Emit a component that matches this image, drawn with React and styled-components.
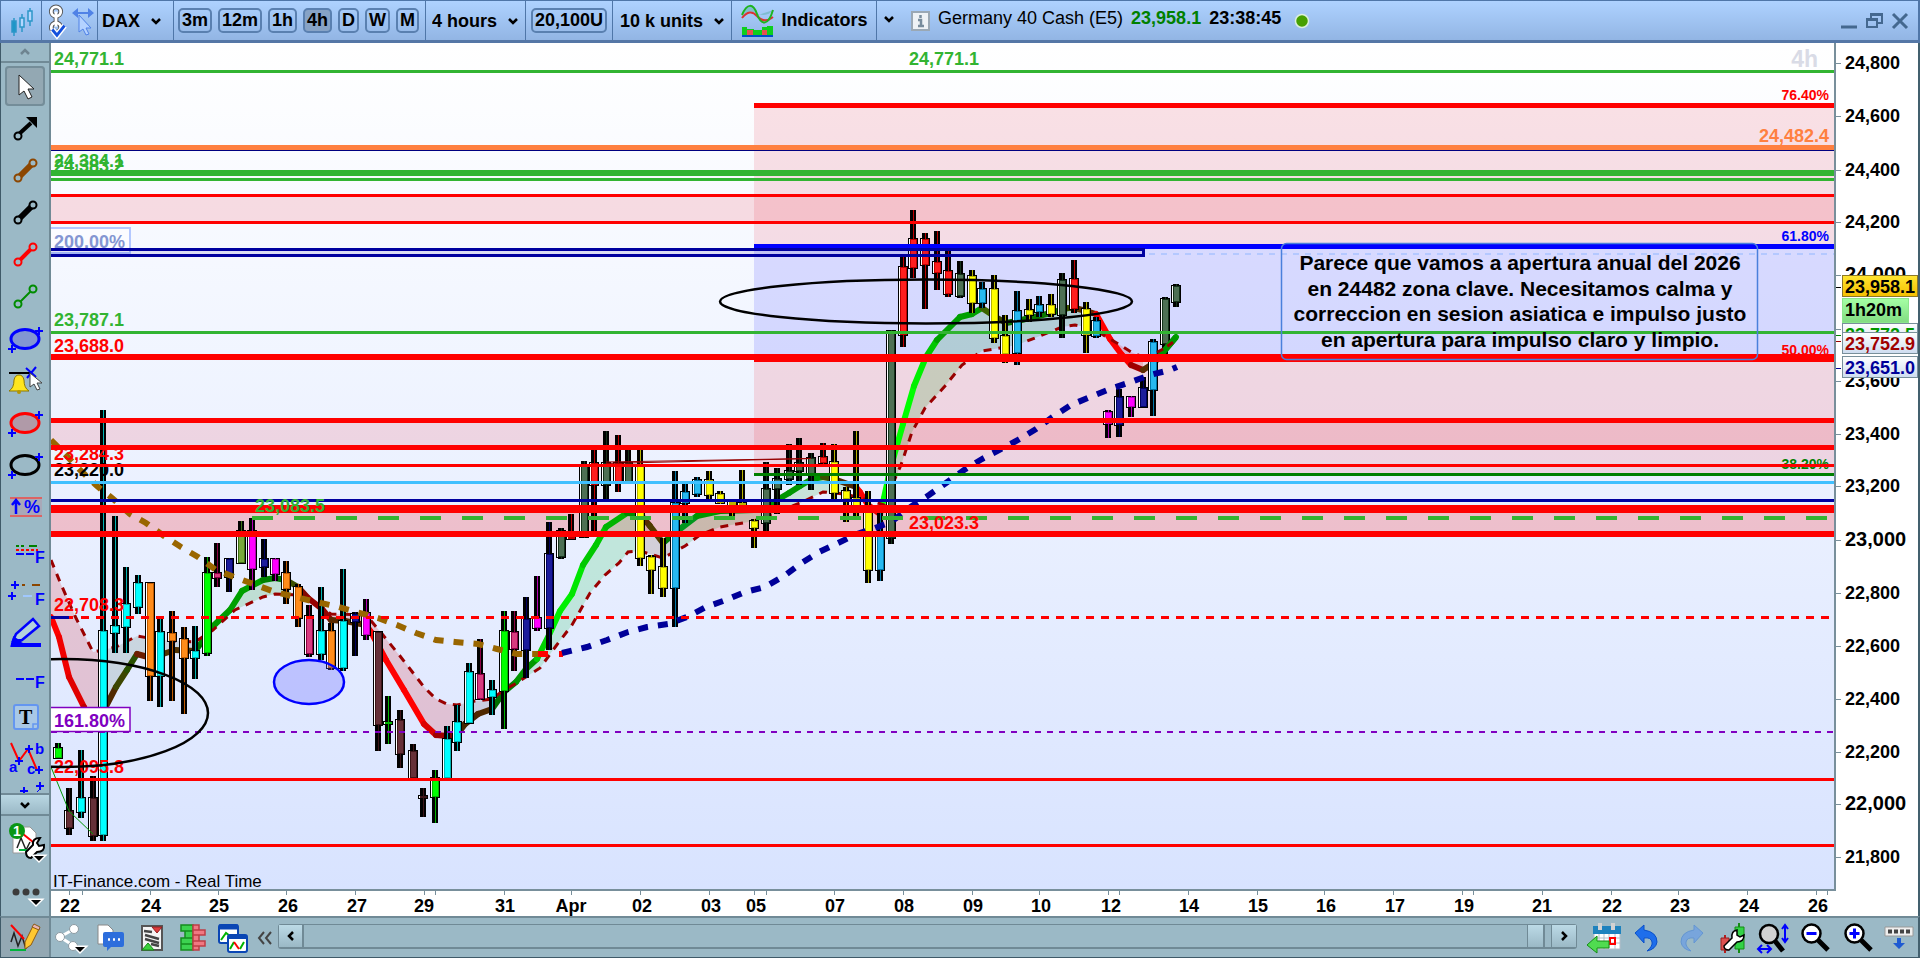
import styled, { createGlobalStyle, css } from "styled-components";

const GlobalStyle = createGlobalStyle`
  * {
    box-sizing: border-box;
  }

  body {
    margin: 0;
    overflow: hidden;
    font-family: "Liberation Sans", Arial, sans-serif;
    color: #000;
  }

  button, select {
    font: inherit;
    color: inherit;
    padding: 0;
    margin: 0;
    border: 0;
    background: none;
  }
`;

const Window = styled.div`
  display: flex;
  flex-direction: column;
  height: 100vh;
  background-color: #9bb9c6;
`;

const TopBar = styled.header`
  display: flex;
  height: 43px;
  flex-shrink: 0;
  border-top: 1px solid #4f76a8;
  border-bottom: 3px solid #5577a6;
  border-left: 1px solid #4f76a8;
  border-right: 2px solid #4f76a8;
  background: linear-gradient(#aed2ff, #92b5e4);
  font-size: 18px;
  font-weight: bold;
`;

const Group = styled.div`
  display: flex;
  align-items: center;
  width: ${(props) => props.$width}px;
  padding-left: ${(props) => props.$pad || 0}px;
  gap: ${(props) => props.$gap || 0}px;
  border-right: 1px solid #4f76a8;
  flex-shrink: 0;
`;

const IconButton = styled.button`
  display: flex;
  align-items: center;
  justify-content: center;
  flex-shrink: 0;
  width: ${(props) => props.$width || 32}px;
  height: ${(props) => props.$height || 36}px;

  svg {
    overflow: visible;
  }
`;

const Frame = styled.button`
  height: 25px;
  padding: 0 2px;
  line-height: 21px;
  border: 2px solid #5a80b0;
  border-radius: 5px;
  white-space: nowrap;
  ${(props) =>
    props.$active &&
    css`
      background-color: #87a3c6;
    `}
`;

const Picker = styled.label`
  display: flex;
  align-items: center;
  gap: 10px;

  select {
    appearance: none;
    width: ${(props) => props.$width}px;
    outline: none;
  }
`;

const Quote = styled.div`
  display: flex;
  align-items: center;
  flex: 1;
  gap: 8px;
  padding: 0 0 4px 6px;
  white-space: nowrap;
`;

const InfoIcon = styled.svg`
  margin: 4px 0 0 8px;
`;

const StatusDot = styled.svg`
  margin-top: 5px;
`;

const Name = styled.span`
  font-weight: normal;
`;

const Last = styled.span`
  color: #008000;
`;

const WindowButtons = styled.div`
  display: flex;
  align-items: center;
  padding-right: 10px;
  gap: 9px;
`;

const Middle = styled.main`
  display: flex;
  flex: 1;
  min-height: 0;
`;

const Sidebar = styled.nav`
  display: flex;
  flex-direction: column;
  width: 51px;
  flex-shrink: 0;
  border-left: 1px solid #3f5a68;
  border-right: 2px solid #708a96;
  background-color: #9bb9c6;
`;

const Scroller = styled.button`
  display: flex;
  align-items: center;
  justify-content: center;
  height: 20px;
  flex-shrink: 0;
  border-bottom: 2px solid #708a96;
  ${(props) =>
    props.$raised &&
    css`
      height: 23px;
      border-top: 2px solid #708a96;
      background: linear-gradient(#b9d7e3, #9bb9c6);
    `}
`;

const Tools = styled.div`
  display: flex;
  flex-direction: column;
  align-items: center;
  gap: 2px;
  padding-top: 3px;
  flex: 1;
  min-height: 0;
  overflow: hidden;
`;

const Tool = styled.button`
  width: 40px;
  height: 40px;
  flex-shrink: 0;
  border-radius: 4px;
  ${(props) =>
    props.$active &&
    css`
      background-color: #93a8b3;
      box-shadow: inset 0 0 0 2px #748d99;
    `}

  svg {
    display: block;
    overflow: visible;
  }
`;

const SideFoot = styled.div`
  display: flex;
  flex-direction: column;
  align-items: center;
  height: 100px;
  flex-shrink: 0;
  padding-top: 6px;
  gap: 20px;
`;

const Chart = styled.section`
  display: flex;
  flex-direction: column;
  flex: 1;
  min-width: 0;
  border-right: 2px solid #43606e;
  background-color: #fff;

  svg text {
    font-size: 18px;
    font-weight: bold;
    white-space: pre;
  }
`;

const Row = styled.div`
  display: flex;
  flex: 1;
  min-height: 0;
`;

const Plot = styled.svg`
  flex: 1;
  min-width: 0;
  background: linear-gradient(#ffffff, #eaf0ff 55%, #d8e3ff);
`;

const PriceAxis = styled.svg`
  width: 84px;
  flex-shrink: 0;
  border-left: 2px solid #788f9b;
`;

const TimeAxis = styled.svg`
  height: 27px;
  flex-shrink: 0;
`;

const BottomBar = styled.footer`
  display: flex;
  align-items: center;
  height: 42px;
  flex-shrink: 0;
  border-top: 2px solid #708a96;
  border-bottom: 1px solid #3f5a68;
  border-left: 1px solid #3f5a68;
  border-right: 2px solid #43606e;
  background-color: #9bb9c6;
`;

const DrawMode = styled(IconButton)`
  width: 50px;
  height: 39px;
  border-right: 2px solid #708a96;
  background-color: #93a8b3;
`;

const BottomIcons = styled.div`
  display: flex;
  align-items: center;
  gap: 6px;
  padding: ${(props) => props.$padding};
`;

const Track = styled.div`
  display: flex;
  flex: 1;
  justify-content: space-between;
  height: 25px;
  margin-bottom: 2px;
  border: 2px solid #708a96;
  border-width: 1px 1px 2px;
  border-radius: 3px;
`;

const TrackButton = styled.button`
  display: flex;
  align-items: center;
  justify-content: center;
  width: 25px;
  border: solid #708a96;
  border-width: ${(props) => (props.$end ? "0 0 0 1px" : "0 2px 0 0")};
  background: linear-gradient(#bcdae6, #9bb9c6);
`;

const TrackEnd = styled.div`
  display: flex;
  gap: 6px;
`;

const Thumb = styled.div`
  width: 18px;
  border: solid #708a96;
  border-width: 0 2px 0 1px;
  background: linear-gradient(#bcdae6, #9bb9c6);
`;

const GREEN = "#32b432";
const RED = "#ff0000";
const NAVY = "#0000a0";

// candle colours: [fill, shaded edge]
const TONES = {
  g: ["#00ff00", "#00b400"],
  m: ["#663038", "#3c1418"],
  c: ["#00ffff", "#00b4b4"],
  o: ["#ff8c1a", "#c05a00"],
  p: ["#d83c80", "#8c0046"],
  n: ["#1c1c9c", "#000060"],
  l: ["#78aa3c", "#3c6e14"],
  f: ["#ff00ff", "#b400b4"],
  d: ["#4e7054", "#14321a"],
  r: ["#ff1e1e", "#c00000"],
  y: ["#ffff00", "#b9b400"],
  s: ["#28b9f0", "#0078aa"],
};

// x, high, body top, body bottom, low, tone
const CANDLES = [
  [58, 743, 748, 758, 758, "g"],
  [69, 788, 811, 828, 835, "m"],
  [81, 750, 798, 812, 818, "c"],
  [93, 776, 798, 836, 841, "m"],
  [103, 410, 631, 835, 841, "c"],
  [115, 516, 626, 633, 653, "c"],
  [126, 567, 604, 627, 653, "c"],
  [138, 575, 583, 607, 614, "c"],
  [150, 583, 583, 676, 701, "o"],
  [160, 619, 632, 676, 707, "c"],
  [172, 611, 633, 641, 701, "o"],
  [184, 627, 639, 658, 714, "o"],
  [195, 626, 651, 658, 679, "c"],
  [207, 557, 573, 653, 656, "g"],
  [217, 543, 573, 578, 587, "p"],
  [229, 558, 559, 577, 592, "n"],
  [241, 521, 531, 563, 563, "l"],
  [252, 518, 531, 569, 590, "f"],
  [264, 539, 559, 567, 577, "n"],
  [275, 558, 559, 574, 581, "f"],
  [286, 561, 573, 589, 604, "o"],
  [298, 584, 587, 618, 627, "o"],
  [309, 605, 616, 654, 657, "p"],
  [321, 587, 631, 654, 660, "c"],
  [331, 623, 631, 668, 670, "o"],
  [343, 569, 621, 668, 671, "c"],
  [355, 612, 614, 622, 656, "n"],
  [366, 599, 613, 635, 640, "f"],
  [378, 632, 632, 725, 751, "m"],
  [388, 696, 722, 723, 744, "g"],
  [400, 710, 720, 754, 768, "m"],
  [413, 744, 751, 778, 778, "m"],
  [423, 788, 796, 797, 817, "m"],
  [435, 770, 778, 797, 823, "g"],
  [447, 726, 739, 778, 778, "c"],
  [457, 705, 722, 742, 751, "c"],
  [469, 663, 672, 723, 723, "c"],
  [480, 639, 674, 699, 700, "p"],
  [492, 680, 690, 697, 715, "c"],
  [504, 611, 631, 691, 729, "g"],
  [514, 611, 632, 649, 671, "p"],
  [526, 597, 619, 650, 678, "n"],
  [537, 576, 618, 628, 631, "f"],
  [549, 522, 554, 628, 650, "n"],
  [561, 528, 531, 557, 559, "d"],
  [571, 514, 537, 538, 538, "r"],
  [584, 461, 465, 537, 538, "d"],
  [594, 447, 463, 485, 532, "r"],
  [606, 431, 463, 485, 502, "d"],
  [618, 435, 463, 482, 492, "r"],
  [628, 448, 463, 483, 484, "d"],
  [640, 449, 465, 558, 566, "y"],
  [651, 555, 557, 570, 594, "y"],
  [663, 538, 567, 588, 597, "y"],
  [675, 471, 503, 588, 627, "s"],
  [685, 483, 492, 503, 523, "s"],
  [697, 477, 480, 494, 497, "s"],
  [709, 471, 480, 495, 502, "y"],
  [720, 491, 494, 503, 504, "y"],
  [732, 500, 502, 506, 517, "y"],
  [742, 470, 503, 506, 510, "y"],
  [754, 519, 521, 528, 548, "y"],
  [766, 462, 489, 523, 532, "d"],
  [777, 468, 479, 489, 514, "d"],
  [789, 444, 471, 479, 485, "d"],
  [799, 438, 463, 471, 485, "d"],
  [811, 453, 458, 475, 490, "d"],
  [823, 443, 457, 463, 467, "r"],
  [834, 444, 462, 493, 499, "y"],
  [846, 487, 491, 499, 522, "y"],
  [856, 431, 498, 506, 517, "y"],
  [868, 491, 512, 570, 583, "y"],
  [880, 510, 535, 570, 581, "s"],
  [891, 330, 331, 538, 544, "d"],
  [903, 257, 267, 335, 347, "r"],
  [913, 210, 239, 268, 278, "r"],
  [925, 233, 239, 265, 309, "r"],
  [937, 231, 262, 273, 290, "r"],
  [948, 251, 271, 294, 297, "r"],
  [960, 261, 274, 296, 298, "d"],
  [972, 270, 276, 303, 313, "y"],
  [982, 282, 289, 303, 308, "s"],
  [994, 275, 289, 338, 343, "y"],
  [1005, 315, 336, 354, 363, "y"],
  [1017, 291, 311, 353, 365, "s"],
  [1029, 299, 310, 315, 322, "y"],
  [1039, 296, 305, 312, 317, "s"],
  [1051, 294, 305, 314, 317, "y"],
  [1062, 273, 280, 315, 338, "d"],
  [1074, 260, 279, 309, 313, "r"],
  [1086, 302, 309, 335, 353, "y"],
  [1096, 317, 321, 336, 338, "s"],
  [1108, 410, 412, 424, 438, "f"],
  [1119, 389, 397, 425, 437, "n"],
  [1131, 396, 397, 407, 417, "f"],
  [1143, 377, 388, 407, 407, "n"],
  [1153, 339, 342, 390, 416, "s"],
  [1165, 297, 299, 344, 354, "d"],
  [1176, 284, 286, 302, 307, "d"],
];

// fast average: x, y, colour of the stretch that ends there
const FAST = [
  [51, 617], [59, 637, "#ff0000"], [69, 677, "#f00000"], [84, 707, "#e00000"],
  [93, 725, "#c00000"], [103, 712, "#5a1e00"], [116, 687, "#502800"],
  [127, 670, "#3c4600"], [137, 654, "#285000"], [148, 657, "#6e1e00"],
  [160, 655, "#6e1e00"], [175, 650, "#503200"], [195, 651, "#503200"],
  [202, 642, "#007800"], [209, 630, "#008c00"], [230, 610, "#009b00"],
  [242, 591, "#00a000"], [263, 580, "#00a000"], [275, 578, "#008200"],
  [286, 580, "#007800"], [298, 587, "#3c5000"], [308, 598, "#820a00"],
  [322, 609, "#960000"], [331, 620, "#960000"], [345, 621, "#5a2800"],
  [366, 625, "#5a2800"], [371, 632, "#dc0000"], [386, 660, "#ff0000"],
  [404, 690, "#ff0000"], [424, 724, "#ff0000"], [436, 735, "#dc0000"],
  [447, 736, "#a00000"], [457, 735, "#820000"], [465, 724, "#462800"],
  [478, 714, "#462800"], [492, 709, "#502800"], [504, 692, "#006e00"],
  [516, 682, "#008200"], [526, 669, "#009600"], [537, 659, "#009600"],
  [549, 635, "#00d200"], [560, 611, "#00f000"], [572, 594, "#00f000"],
  [583, 565, "#00e600"], [596, 545, "#00c800"], [606, 527, "#00c800"],
  [627, 513, "#00b400"], [640, 514, "#008c00"], [650, 526, "#5a2d00"],
  [663, 543, "#503c00"], [676, 532, "#007800"], [697, 516, "#00961e"],
  [720, 511, "#009600"], [754, 510, "#007d00"], [769, 506, "#008200"],
  [777, 500, "#009600"], [789, 493, "#009600"], [800, 486, "#009600"],
  [812, 479, "#009600"], [823, 477, "#009600"], [834, 479, "#3c5000"],
  [856, 487, "#502800"], [860, 492, "#ff0000"], [868, 505, "#ff0000"],
  [880, 514, "#dc0000"], [884, 498, "#00ff00"], [890, 470, "#00ff00"],
  [903, 424, "#00ff00"], [914, 386, "#00ff00"], [926, 357, "#00f000"],
  [937, 340, "#00c800"], [960, 317, "#00a000"], [972, 314, "#00a000"],
  [982, 308, "#00a000"], [994, 316, "#3c6400"], [1006, 323, "#3c4600"],
  [1017, 321, "#0a6e00"], [1051, 313, "#0a7800"], [1068, 308, "#0a8200"],
  [1075, 308, "#3c5000"], [1086, 311, "#5a3200"], [1096, 314, "#6e2800"],
  [1110, 339, "#ff0000"], [1122, 355, "#ff0000"], [1131, 365, "#ff0000"],
  [1143, 370, "#a00000"], [1154, 363, "#5a2d00"], [1165, 350, "#008200"],
  [1176, 337, "#00a000"],
];

const SLOW = [
  [51, 560], [60, 582], [75, 616], [93, 652], [116, 647], [137, 636],
  [160, 640], [195, 642], [213, 630], [235, 610], [263, 597], [275, 594],
  [298, 595], [309, 600], [331, 614], [366, 615], [378, 629], [400, 656],
  [424, 687], [436, 699], [447, 704], [457, 705], [475, 701], [492, 699],
  [504, 690], [515, 684], [540, 668], [556, 646], [572, 625], [590, 593],
  [605, 575], [619, 563], [628, 552], [640, 551], [663, 558], [685, 546],
  [700, 535], [720, 527], [754, 521], [777, 512], [800, 503], [823, 492],
  [845, 494], [868, 500], [884, 505], [890, 490], [901, 465], [912, 432],
  [925, 408], [945, 386], [962, 365], [982, 351], [1000, 348], [1017, 345],
  [1040, 336], [1062, 327], [1075, 325], [1086, 327], [1100, 333],
  [1120, 345], [1131, 352], [1143, 357], [1154, 354], [1165, 348], [1176, 340],
];

const BANDS = [
  [51, 103, "rgba(220,0,0,.17)"],
  [103, 208, "rgba(70,100,60,.16)"],
  [208, 290, "rgba(0,150,0,.17)"],
  [300, 458, "rgba(220,0,0,.17)"],
  [458, 504, "rgba(90,60,60,.16)"],
  [504, 635, "rgba(0,190,50,.17)"],
  [635, 680, "rgba(110,60,40,.18)"],
  [680, 850, "rgba(0,150,0,.15)"],
  [886, 1100, "rgba(0,150,0,.16)"],
  [1100, 1143, "rgba(220,0,0,.17)"],
];

const BROWN = "51,440 64,453 80,470 97,486 112,498 130,514 146,523 164,536 181,547 198,557 216,570 237,578 256,585 275,592 316,602 335,606 353,611 378,618 397,625 416,633 436,640 455,642 478,644 497,649 517,654 540,654";
const BLUE = "562,653 587,647 607,640 628,632 647,627 668,624 687,617 706,607 726,600 745,592 765,587 784,576 800,564 819,552 838,543 857,534 875,528 891,522 912,506 929,495 946,483 964,470 982,459 999,450 1018,440 1036,429 1054,416 1071,405 1090,397 1110,389 1131,382 1150,375 1170,370 1177,367";

// from x, top, bottom, fill
const ZONES = [
  [754, 105, 246, "rgba(230,20,40,.12)"],
  [51, 195, 223, "rgba(240,0,20,.12)"],
  [754, 246, 357, "rgba(0,0,255,.12)"],
  [754, 357, 474, "rgba(240,0,20,.12)"],
  [51, 420, 447, "rgba(240,0,20,.12)"],
  [51, 509, 534, "rgba(255,0,0,.2)"],
];

// from x, top, thickness, colour
const LEVELS = [
  [51, 70, 3, GREEN],
  [754, 103, 5, RED],
  [51, 145, 5, "#ff8040"],
  [51, 150, 1, "#000080"],
  [51, 170, 6, GREEN],
  [51, 178, 3, GREEN],
  [51, 194, 3, RED],
  [51, 221, 3, RED],
  [754, 244, 5, "#0000ff"],
  [51, 331, 3, GREEN],
  [51, 354, 6, RED],
  [754, 357, 5, RED],
  [51, 418, 5, RED],
  [51, 445, 5, RED],
  [51, 464, 3, RED],
  [754, 473, 3, "#008000"],
  [51, 481, 3, "#40c0ff"],
  [51, 499, 3, NAVY],
  [51, 505, 8, RED],
  [51, 531, 6, RED],
  [51, 778, 3, RED],
  [51, 844, 3, RED],
];

// labels that the level lines cut across
const UNDER_LABELS = [
  [54, 65, "24,771.1", GREEN],
  [909, 65, "24,771.1", GREEN],
  [54, 167, "24,384.1", GREEN],
  [54, 172, "24,383.2", GREEN],
  [54, 326, "23,787.1", GREEN],
  [54, 352, "23,688.0", RED],
  [54, 460, "23,284.3", RED],
  [54, 476, "23,220.0", "#000"],
  [54, 611, "22,708.3", RED],
  [54, 773, "22,095.8", RED],
];

const RIGHT_LABELS = [
  [100, "76.40%", RED],
  [241, "61.80%", "#0000ff"],
  [355, "50.00%", RED],
  [469, "38.20%", "#008000"],
];

const NOTE = [
  [270, "Parece que vamos a apertura anual del 2026"],
  [296, "en 24482 zona clave. Necesitamos calma y"],
  [321, "correccion en sesion asiatica e impulso justo"],
  [347, "en apertura para impulso claro y limpio."],
];

const PRICES = [
  [63, "24,800"], [116, "24,600"], [170, "24,400"], [222, "24,200"],
  [275, "24,000"], [381, "23,600"], [434, "23,400"], [486, "23,200"],
  [540, "23,000"], [593, "22,800"], [646, "22,600"], [699, "22,400"],
  [752, "22,200"], [804, "22,000"], [857, "21,800"],
];

const DAYS = [
  [70, "22"], [151, "24"], [219, "25"], [288, "26"], [357, "27"], [424, "29"],
  [505, "31"], [571, "Apr"], [642, "02"], [711, "03"], [756, "05"],
  [835, "07"], [904, "08"], [973, "09"], [1041, "10"], [1111, "12"],
  [1189, "14"], [1258, "15"], [1326, "16"], [1395, "17"], [1464, "19"],
  [1542, "21"], [1612, "22"], [1680, "23"], [1749, "24"], [1818, "26"],
];

const TICKS = [
  69, 82, 150, 218, 286, 355, 424, 435, 504, 571, 640, 709, 754, 766, 834, 903,
  972, 1039, 1108, 1119, 1188, 1257, 1324, 1393, 1462, 1473, 1542, 1611, 1678,
  1747, 1816, 1827,
];

const yAt = (line, x) => {
  const i = Math.max(1, line.findIndex((p) => p[0] >= x));
  const [x0, y0] = line[i - 1];
  const [x1, y1] = line[i];
  return y0 + ((y1 - y0) * (x - x0)) / (x1 - x0);
};

const slice = (line, from, to) => [
  [from, yAt(line, from)],
  ...line.filter((p) => p[0] > from && p[0] < to),
  [to, yAt(line, to)],
];

const toPoints = (line) => line.map((p) => `${p[0]},${p[1]}`).join(" ");

const Candle = ({ data }) => {
  const [x, high, top, bottom, low, tone] = data;
  const [fill, shade] = TONES[tone];
  const h = Math.max(bottom - top, 2);
  return (
    <g shapeRendering="crispEdges">
      <rect x={x - 3} y={high} width="6" height={low - high} />
      <rect x={x - 5} y={top - 1} width="10" height={h + 2} />
      <rect x={x - 4} y={top} width="1" height={h} fill="#fff" />
      <rect x={x} y={high} width="1" height={low - high} fill={shade} />
      <rect x={x - 3} y={top} width="7" height={h} fill={shade} />
      {h > 4 && (
        <rect x={x - 2} y={top + 1} width="5" height={h - 2} fill={fill} />
      )}
    </g>
  );
};

const PlotArea = () => (
  <Plot>
    <g transform="translate(-51 -43)">
      {ZONES.map(([x, y, bottom, fill], i) => (
        <rect key={i} x={x} y={y} width="4000" height={bottom - y} fill={fill} />
      ))}
      {BANDS.map(([from, to, fill]) => (
        <polygon
          key={from}
          fill={fill}
          points={toPoints([
            ...slice(FAST, from, to),
            ...slice(SLOW, from, to).reverse(),
          ])}
        />
      ))}
      {CANDLES.map(([x, high, , , low]) => (
        <rect key={x} x={x - 3} y={high} width="6" height={low - high} />
      ))}
      {FAST.slice(1).map(([x, y, color], i) => (
        <line
          key={x}
          x1={FAST[i][0]}
          y1={FAST[i][1]}
          x2={x}
          y2={y}
          stroke={color}
          strokeWidth="6"
          strokeLinecap="round"
        />
      ))}
      <polyline points={toPoints(SLOW)} fill="none" stroke="#990000" strokeWidth="3" strokeDasharray="8 7" />
      {CANDLES.map((c) => (
        <Candle key={c[0]} data={c} />
      ))}
      <polyline points={toPoints(slice(FAST, 1157, 1176))} fill="none" stroke="#009600" strokeWidth="6" />
      <polyline points={toPoints(slice(SLOW, 1157, 1176))} fill="none" stroke="#990000" strokeWidth="3" strokeDasharray="7 5" />
      <polyline points={BROWN} fill="none" stroke="#996600" strokeWidth="6" strokeDasharray="10 10" />
      <path d="M538 654h10M559 654h4" stroke={RED} strokeWidth="6" />
      <polyline points={BLUE} fill="none" stroke="#000099" strokeWidth="6" strokeDasharray="10 10" />
      <polyline points="51,767 69,811 93,834" fill="none" stroke="#009600" />
      <path d="M606 462L811 458.5M606 463.500L811 458.5" stroke="#960000" />

      <path d="M51 254H131M1149 254H4000" stroke="#b4c8ff" strokeWidth="2" strokeDasharray="6 6" />
      <rect x="40" y="228" width="90" height="25" fill="#fbfcff" stroke="#b4c8ff" strokeWidth="2" />
      <text x="54" y="248" fill="#8496d2">200.00%</text>
      {UNDER_LABELS.map(([x, y, text, color]) => (
        <text key={text + x} x={x} y={y} fill={color}>{text}</text>
      ))}
    </g>
    {RIGHT_LABELS.map(([y, text, color]) => (
      <text
        key={text}
        x="100%"
        y={y - 43}
        dx="-5"
        textAnchor="end"
        fill={color}
        style={{ fontSize: 14 }}
      >
        {text}
      </text>
    ))}
    <text x="100%" y="24" dx="-16" textAnchor="end" fill="#d9dbe6" style={{ fontSize: 23 }}>4h</text>
    <text x="100%" y="99" dx="-5" textAnchor="end" fill="#ff8040">24,482.4</text>

    <g transform="translate(-51 -43)">
      {LEVELS.map(([x, y, h, fill]) => (
        <rect key={`${x}-${y}`} x={x} y={y} width="4000" height={h} fill={fill} />
      ))}
      <rect x="40" y="249.500" width="1103.500" height="6" fill="rgba(0,0,160,.1)" stroke={NAVY} strokeWidth="3" />
      <path d="M252 518H4000" stroke={GREEN} strokeWidth="4" strokeDasharray="21 21" />
      <path d="M51 617.500H69" stroke={NAVY} strokeWidth="3" />
      <path d="M69 617.500H73M81 617.500H4000" stroke={RED} strokeWidth="3" strokeDasharray="8 7" />
      <path d="M51 732H4000" stroke="#8000c0" strokeWidth="2" strokeDasharray="6 6" />
      <rect x="40" y="707.500" width="90" height="24" fill="#fff" stroke="#8000c0" strokeWidth="1.500" />
      <text x="54" y="727" fill="#8000c0">161.80%</text>
      <text x="255" y="512" fill={GREEN}>23,083.5</text>
      <text x="909" y="529" fill={RED}>23,023.3</text>

      <ellipse cx="63" cy="713" rx="145" ry="54" fill="none" stroke="#000" strokeWidth="2.500" />
      <ellipse cx="926" cy="301.500" rx="206" ry="22" fill="none" stroke="#000" strokeWidth="2.500" />
      <ellipse cx="309" cy="682" rx="35" ry="22" fill="rgba(90,90,255,.27)" stroke="#0000ff" strokeWidth="2.500" />

      <rect x="1281.500" y="243.500" width="476" height="116" rx="5" fill="none" stroke="#4a80dc" strokeWidth="1.500" />
      {NOTE.map(([y, text]) => (
        <text key={y} x="1520" y={y} textAnchor="middle" style={{ fontSize: 21 }}>{text}</text>
      ))}
      <text x="53" y="887" style={{ fontSize: 17, fontWeight: "normal" }}>IT-Finance.com - Real Time</text>
    </g>
  </Plot>
);

const PriceTag = ({ y, h, w = 75, fill, edge, color, children }) => (
  <g>
    <rect x="1842.500" y={y + 0.5} width={w} height={h - 1} fill={fill} stroke={edge} />
    <text x="1845" y={y + 18} fill={color}>{children}</text>
  </g>
);

const Prices = () => (
  <PriceAxis>
    <defs>
      <linearGradient id="gold" x2="0" y2="1">
        <stop stopColor="#ffe632" />
        <stop offset="1" stopColor="#f5be00" />
      </linearGradient>
      <linearGradient id="mint" x2="0" y2="1">
        <stop stopColor="#a5ffa5" />
        <stop offset="1" stopColor="#82dc82" />
      </linearGradient>
      <linearGradient id="ice" x2="0" y2="1">
        <stop stopColor="#ffffff" />
        <stop offset="1" stopColor="#cddcf0" />
      </linearGradient>
    </defs>
    <g transform="translate(-1836 -43)">
      {PRICES.map(([y, text]) => (
        <g key={text}>
          <rect x="1836" y={y} width="5" height="1" fill="#788f9b" />
          <text x="1845" y={y + 6} style={{ fontSize: text.endsWith("000") ? 20 : 18 }}>{text}</text>
        </g>
      ))}
      <path d="M1836 329.500h5" stroke="#788f9b" />
      <path d="M1836 287.500h5" stroke="#000" />
      <path d="M1836 335.500h5" stroke="#008000" />
      <path d="M1836 341.500h5" stroke="#990000" />
      <path d="M1836 368.500h5" stroke="#000099" />
      <PriceTag y={323} h={22} fill="url(#ice)" edge="#788f9b" color="#009600">23,772.5</PriceTag>
      <PriceTag y={275} h={22} fill="url(#gold)" edge="#8c7828">23,958.1</PriceTag>
      <PriceTag y={298} h={25} w={66} fill="url(#mint)" edge="#8ce68c">1h20m</PriceTag>
      <PriceTag y={332} h={22} fill="url(#ice)" edge="#788f9b" color="#a00000">23,752.9</PriceTag>
      <PriceTag y={356} h={22} fill="url(#ice)" edge="#788f9b" color="#000099">23,651.0</PriceTag>
    </g>
  </PriceAxis>
);

const Days = () => (
  <TimeAxis>
    <rect width="calc(100% - 82px)" height="2" fill="#788f9b" />
    <g transform="translate(-51 0)">
      {TICKS.map((x) => (
        <rect key={x} x={x} y="2" width="1" height="4" fill="#788f9b" />
      ))}
      {DAYS.map(([x, text]) => (
        <text key={x} x={x} y="23" textAnchor="middle">{text}</text>
      ))}
    </g>
  </TimeAxis>
);

const Chevron = ({ dir = "down", color = "#000" }) => {
  const turn = { down: 0, up: 180, left: 90, right: 270 }[dir];
  return (
    <svg width="12" height="10" viewBox="0 0 12 10" aria-hidden="true">
      <path d="M2 3L6 7L10 3" transform={`rotate(${turn} 6 5)`} fill="none" stroke={color} strokeWidth="2.500" />
    </svg>
  );
};

const Plus = ({ x, y }) => (
  <path d={`M${x - 4} ${y}h8M${x} ${y - 4}v8`} stroke="#0000ff" strokeWidth="2" />
);

const Segment = ({ color, w }) => (
  <g fill="none" stroke={color}>
    <path d="M14 27L29 12" strokeWidth={w} />
    <circle cx="13" cy="28" r="3.500" strokeWidth="2" fill="#9bb9c6" />
    <circle cx="28" cy="13" r="3.500" strokeWidth="2" fill="#9bb9c6" />
  </g>
);

const Oval = ({ color, fill }) => (
  <g>
    <ellipse cx="20" cy="21" rx="14" ry="9.500" fill={fill} stroke={color} strokeWidth="3" />
    <Plus x={34} y={13} />
    <Plus x={7} y={31} />
  </g>
);

const Letter = ({ x, y, size = 16, serif, color = "#0000ff", children }) => (
  <text
    x={x}
    y={y}
    fontSize={size}
    fontWeight="bold"
    fill={color}
    fontFamily={serif ? "Liberation Serif, serif" : undefined}
  >
    {children}
  </text>
);

const TOOLS = [
  ["Select", <path d="M14 9v20l5-4 4 8 4-2-4-8h6z" fill="#fff" stroke="#222" />],
  ["Arrow", <g><path d="M14 26L26 15" stroke="#000" strokeWidth="4" /><path d="M21 9h11v11z" /><circle cx="13" cy="28" r="3.500" fill="#9bb9c6" stroke="#000" strokeWidth="2" /></g>],
  ["Brown segment", <Segment color="#8c4600" w={6} />],
  ["Black segment", <Segment color="#000" w={6} />],
  ["Red segment", <Segment color="#ff0000" w={4} />],
  ["Green segment", <Segment color="#008c00" w={2} />],
  ["Blue ellipse", <Oval color="#0000ff" fill="#8296d2" />],
  ["Alert", <g><path d="M4 13h22" stroke="#000" strokeWidth="2" /><path d="M21 8l10 9M31 7l-9 11" stroke="#0000ff" strokeWidth="2" /><path d="M4 31q5-3 5-11q1-5 5-5t5 5q0 8 5 11z" fill="#ffe61e" stroke="#8c7800" /><circle cx="14" cy="32" r="2" fill="#b49600" /><path d="M25 13v14l4-3 3 6 3-1-3-6h5z" fill="#fff" stroke="#444" /></g>],
  ["Red ellipse", <Oval color="#ff0000" fill="#b09aa8" />],
  ["Black ellipse", <Oval color="#000" fill="none" />],
  ["Percent", <g><path d="M5 12h32v18H5z" fill="#a8a8b8" /><path d="M5 12h32M5 30h32" stroke="#dc6464" strokeWidth="2" /><path d="M11 28V15M7 19l4-5 4 5" fill="none" stroke="#0000ff" strokeWidth="2.500" /><Letter x={19} y={27} size={18}>%</Letter></g>],
  ["Fibonacci 1", <g strokeWidth="2"><path d="M11 18h22" stroke="#008000" strokeDasharray="3 2 3 5 8" /><path d="M11 22h22" stroke={RED} strokeDasharray="3 2" /><path d="M11 26h19" stroke="#0000ff" strokeDasharray="8 2" /><Letter x={30} y={35}>F</Letter></g>],
  ["Fibonacci 2", <g strokeWidth="2"><Plus x={10} y={15} /><Plus x={7} y={26} /><path d="M17 15h3M27 15h8" stroke="#8c4600" /><path d="M18 26h9" stroke="#a0c8ff" /><Letter x={30} y={35}>F</Letter></g>],
  ["Highlighter", <g stroke="#0000ff" strokeWidth="2.500"><path d="M8 29L11 22L28 7L34 14L17 28z" fill="#b4d2dc" /><path d="M6 33h30" strokeWidth="4" /><path d="M7 33l2-7 6 4z" fill="#0000ff" /></g>],
  ["Fibonacci 3", <g strokeWidth="2"><path d="M11 25h20" stroke="#0000ff" strokeDasharray="8 2" /><Letter x={30} y={34}>F</Letter></g>],
  ["Text", <g><rect x="9" y="9" width="24" height="24" rx="2" fill="#a9c8e6" stroke="#6496f0" strokeWidth="2" /><path d="M33 28h-5v5" fill="none" stroke="#6496f0" strokeWidth="1.500" /><Letter x={14} y={28} size={20} serif color="#000">T</Letter></g>],
  ["Pattern", <g><path d="M6 5l8 18 9-12 9 21" fill="none" stroke={RED} strokeWidth="2" /><Plus x={14} y={23} /><Plus x={24} y={11} /><Plus x={34} y={32} /><Letter x={4} y={34} size={15}>a</Letter><Letter x={30} y={16} size={15}>b</Letter><Letter x={22} y={36} size={15}>c</Letter></g>],
  ["Next pattern", <g><Plus x={35} y={6} /><Plus x={19} y={11} /><path d="M32 12l3-3" stroke="#0000ff" /></g>],
];

const PERIODS = ["3m", "12m", "1h", "4h", "D", "W", "M"];

const Toolbar = () => (
  <TopBar>
    <Group $width={41} $pad={5}>
      <IconButton aria-label="Candles">
        <svg width="26" height="30" viewBox="0 0 26 30" stroke="#2d96c8" strokeWidth="1.500" fill="none">
          <path d="M5 12v18M13 8v18M21 2v18" />
          <rect x="3" y="15" width="4" height="11" fill="#1e96c8" />
          <rect x="11" y="12" width="4" height="9" fill="#b4d7ff" />
          <rect x="19" y="5" width="4" height="10" fill="#b4d7ff" />
        </svg>
      </IconButton>
    </Group>
    <Group $width={56}>
      <IconButton $width={28} aria-label="Link">
        <svg width="22" height="34" viewBox="0 0 22 36" fill="none">
          <g stroke="#555" strokeWidth="5">
            <ellipse cx="11" cy="8" rx="5" ry="5" />
            <path d="M11 10v13" />
            <ellipse cx="11" cy="25" rx="5" ry="5" />
          </g>
          <g stroke="#fff" strokeWidth="3">
            <ellipse cx="11" cy="8" rx="5" ry="5" />
            <ellipse cx="11" cy="25" rx="5" ry="5" />
          </g>
          <path d="M11 8v16" stroke="#fff" strokeWidth="3" />
          <path d="M7 27l5 6 8-10" stroke="#fff" strokeWidth="6" />
          <path d="M7 27l5 6 8-10" stroke="#1450dc" strokeWidth="3" />
        </svg>
      </IconButton>
      <IconButton $width={26} aria-label="Cursor sync">
        <svg width="22" height="28" viewBox="0 0 22 28">
          <path d="M0 6l6-5v4h10v-4l6 5-6 5v-4H6v4z" fill="#5082e6" />
          <path d="M7 8v17l4-3 3 6 3-1-3-6h5z" fill="#b4d2ff" stroke="#5082e6" />
        </svg>
      </IconButton>
    </Group>
    <Group $width={76} $pad={4}>
      <Picker $width={38}>
        <select aria-label="Market"><option>DAX</option></select>
        <Chevron />
      </Picker>
    </Group>
    <Group $width={252} $pad={4} $gap={6}>
      {PERIODS.map((p) => (
        <Frame key={p} $active={p === "4h"}>{p}</Frame>
      ))}
    </Group>
    <Group $width={100} $pad={6}>
      <Picker $width={65}>
        <select aria-label="Period"><option>4 hours</option></select>
        <Chevron />
      </Picker>
    </Group>
    <Group $width={87} $pad={5}>
      <Frame>20,100U</Frame>
    </Group>
    <Group $width={119} $pad={7}>
      <Picker $width={83}>
        <select aria-label="Quantity"><option>10 k units</option></select>
        <Chevron />
      </Picker>
    </Group>
    <Group $width={145} $pad={10}>
      <IconButton aria-label="Indicators">
        <svg width="32" height="32" viewBox="0 0 32 32">
          <path d="M0 11C6-3 12-3 16 10T31 5Q26 12 16 9Q8 3 0 11" fill="#64b4b4" opacity=".6" />
          <path d="M0 13Q8 3 15 11T31 12" fill="none" stroke="#dc3232" strokeWidth="2" />
          <path d="M0 10C5-2 11-2 15 9S26 22 31 5" fill="none" stroke="#1eb41e" strokeWidth="2" />
          <path d="M0 22h5v2h7v1h8v-3h5v-1h6v10H0z" fill="#0dcf1e" />
          <path d="M5 25h6v5H5zM20 25h5v5h-5z" fill="#e65050" />
          <path d="M0 31h31" stroke="#0050c8" strokeWidth="2" />
        </svg>
      </IconButton>
      <IconButton $width={101}>Indicators</IconButton>
    </Group>
    <Quote>
      <IconButton $width={12} $height={20} aria-label="More indicators">
        <Chevron />
      </IconButton>
      <InfoIcon width="19" height="20" viewBox="0 0 19 20">
        <rect x="1" y="1" width="17" height="18" fill="#eef2f5" stroke="#9aa8b4" strokeWidth="2" />
        <path d="M9.500 4v3M7 9h3v6M7 15h6" fill="none" stroke="#788c9c" strokeWidth="2.500" />
      </InfoIcon>
      <Name>Germany 40 Cash (E5)</Name>
      <Last>23,958.1</Last>
      <span>23:38:45</span>
      <StatusDot width="26" height="16" viewBox="0 0 26 16">
        <circle cx="13" cy="8" r="6.500" fill="#46a000" stroke="#dcf0dc" strokeWidth="1.500" />
      </StatusDot>
    </Quote>
    <WindowButtons>
      <IconButton $width={16} aria-label="Minimise">
        <svg width="16" height="16"><path d="M0 14h16" stroke="#44688f" strokeWidth="3" /></svg>
      </IconButton>
      <IconButton $width={17} aria-label="Restore">
        <svg width="17" height="17" fill="none" stroke="#44688f" strokeWidth="2">
          <path d="M5 6V2h11v9h-4M5 3h11" />
          <path d="M1 7h10v8H1zM1 8h10" />
        </svg>
      </IconButton>
      <IconButton $width={16} aria-label="Close">
        <svg width="16" height="16"><path d="M1 1l14 14M15 1L1 15" stroke="#44688f" strokeWidth="3" /></svg>
      </IconButton>
    </WindowButtons>
  </TopBar>
);

const MenuMark = ({ x, y }) => (
  <path d={`M${x - 5} ${y - 2}h10l-5 5z`} fill="#000" stroke="#fff" strokeWidth="3" paintOrder="stroke" />
);

const Lens = ({ children }) => (
  <svg width="30" height="30" viewBox="0 0 30 30">
    <path d="M17 17l10 10" stroke="#000" strokeWidth="5" />
    <circle cx="10.500" cy="10.500" r="9" fill="#fff" stroke="#000" strokeWidth="2.500" />
    {children}
  </svg>
);

const Footer = () => (
  <BottomBar>
    <DrawMode aria-label="Drawing tools">
      <svg width="30" height="28" viewBox="0 0 30 28" fill="none">
        <path d="M1 18L4 9l4 13L12 12l4 13" stroke="#222" strokeWidth="1.500" />
        <path d="M1 1l13 14" stroke={RED} strokeWidth="2" />
        <path d="M0 26h16" stroke="#00b43c" strokeWidth="2" />
        <path d="M15 18L23 2l6 3-8 16-6 4z" fill="#ffc832" stroke="#8c5a14" />
        <path d="M22 3l2-3 6 3-1 3z" fill="#e6b4b4" stroke="#8c5a14" />
      </svg>
    </DrawMode>
    <BottomIcons $padding="0 3px 0 3px">
      <IconButton aria-label="Share">
        <svg width="30" height="28" viewBox="0 0 30 28">
          <g stroke="#fff" strokeWidth="3"><path d="M19 5L5 13l14 9" fill="none" /></g>
          <g fill="#fff" stroke="#8c9aa2"><circle cx="19" cy="5" r="4.500" /><circle cx="5" cy="13" r="4.500" /><circle cx="18" cy="22" r="4.500" /></g>
          <MenuMark x={25} y={25} />
        </svg>
      </IconButton>
      <IconButton $width={38} aria-label="Notes">
        <svg width="28" height="28" viewBox="0 0 28 28">
          <path d="M1 1h10l5 5v14H1z" fill="#fff" stroke="#888" />
          <path d="M8 8h17q2 0 2 2v11q0 2-2 2H14l-4 4v-4H8q-2 0-2-2V10q0-2 2-2z" fill="#2d6edc" />
          <path d="M11 15.500h2M16 15.500h2M21 15.500h2" stroke="#fff" strokeWidth="2.500" />
        </svg>
      </IconButton>
      <IconButton $width={32} aria-label="Report">
        <svg width="22" height="26" viewBox="0 0 22 26">
          <path d="M1 1h20v24H1z" fill="#f4f4f4" stroke="#555" strokeWidth="2" />
          <path d="M3 6l8 1M4 10l14 4M4 14l14 4M10 19l8 2" stroke="#444" strokeWidth="2.500" />
          <path d="M11 2h10l-5 6z" fill="#dc3c3c" stroke="#961e1e" />
          <path d="M1 25l6-7 6 7z" fill="#3cd23c" stroke="#148c14" />
        </svg>
      </IconButton>
      <IconButton $width={37} aria-label="Order book">
        <svg width="26" height="28" viewBox="0 0 26 28">
          <g fill="#3cd250" stroke="#148c1e" strokeWidth="1.500"><path d="M1 1h12v6H1zM5 7h8v7H5zM1 14h12v6H1zM1 20h12v6H1z" /></g>
          <g fill="#f07882" stroke="#be3c46" strokeWidth="1.500"><path d="M13 1h6v5h-6zM13 6h12v5H13zM13 11h6v6h-6zM13 17h12v5H13zM13 22h6v4h-6z" /></g>
        </svg>
      </IconButton>
      <IconButton $width={32} aria-label="Workspaces">
        <svg width="30" height="30" viewBox="0 0 30 30" fill="none">
          <rect x="1" y="2" width="19" height="18" rx="2" fill="#fff" stroke="#0a46b4" strokeWidth="2" />
          <path d="M1 4h19" stroke="#0a46b4" strokeWidth="5" />
          <path d="M3 17l5-7 4 3" stroke="#00b400" strokeWidth="2" />
          <rect x="10" y="12" width="19" height="17" rx="2" fill="#fff" stroke="#0a46b4" strokeWidth="2" />
          <path d="M10 14h19" stroke="#0a46b4" strokeWidth="4" />
          <path d="M12 26l4-7M22 26l4-7" stroke="#00b400" strokeWidth="2" />
          <path d="M16 19l5 7" stroke={RED} strokeWidth="2" />
        </svg>
      </IconButton>
      <IconButton $width={20} aria-label="Collapse">
        <svg width="14" height="14" fill="none" stroke="#444" strokeWidth="2"><path d="M6 1L1 7l5 6M13 1L8 7l5 6" /></svg>
      </IconButton>
    </BottomIcons>
    <Track>
      <TrackButton aria-label="Scroll left"><Chevron dir="left" /></TrackButton>
      <TrackEnd>
        <Thumb />
        <TrackButton $end aria-label="Scroll right"><Chevron dir="right" /></TrackButton>
      </TrackEnd>
    </Track>
    <BottomIcons $padding="0 3px 0 9px">
      <IconButton $width={35} aria-label="Go to date">
        <svg width="34" height="30" viewBox="0 0 34 30">
          <path d="M7 10h26v16H7z" fill="#fff" stroke="#b4bec8" />
          <path d="M12 10v16M17 10v16M22 10v16M28 10v16M7 15h26M7 20h26" stroke="#b4bec8" />
          <path d="M6 3h28v8H6z" fill="#1e82be" />
          <path d="M13 0v7M26 0v7" stroke="#d2d2d2" strokeWidth="4" />
          <path d="M23 15h5v6h-5z" fill="none" stroke={RED} strokeWidth="2" />
          <path d="M0 22l10-9v5h12v7H10v5z" fill="#50dc50" stroke="#148c14" />
        </svg>
      </IconButton>
      <IconButton $width={40} aria-label="Undo">
        <svg width="26" height="28" viewBox="0 0 26 28"><path d="M1 9L10 1v5q13 2 13 12-1 7-10 9 6-5 5-9-1-5-8-4v5z" fill="#1e6eeb" stroke="#0a50c8" /></svg>
      </IconButton>
      <IconButton $width={36} aria-label="Redo">
        <svg width="26" height="28" viewBox="0 0 26 28"><path d="M25 9L16 1v5Q3 8 3 18q1 7 10 9-6-5-5-9 1-5 8-4v5z" fill="#78a5dc" stroke="#6496d2" /></svg>
      </IconButton>
      <IconButton $width={36} aria-label="Chart settings">
        <svg width="28" height="30" viewBox="0 0 28 30">
          <path d="M20 0v30" stroke="#148c14" strokeWidth="2" /><path d="M16 4h9v22h-9z" fill="#32d246" stroke="#148c14" />
          <path d="M6 12v18" stroke="#b41e1e" strokeWidth="2" /><path d="M2 15h8v12H2z" fill="#dc5050" stroke="#961e1e" />
          <path d="M5 23L13 15q-1-7 5-8v5l3 2 4-2q0 7-7 7l-8 8q-5 0-5-4z" fill="#fff" stroke="#000" strokeWidth="1.500" />
        </svg>
      </IconButton>
      <IconButton $width={34} aria-label="Auto scale">
        <svg width="34" height="30" viewBox="0 0 34 30">
          <path d="M18 18l8 10" stroke="#000" strokeWidth="5" />
          <circle cx="12" cy="11" r="9" fill="#d2d2d2" stroke="#000" strokeWidth="2.500" />
          <path d="M28 2v17M25 6l3-4 3 4M25 15l3 4 3-4M1 26h13M5 22l-4 4 4 4M10 22l4 4-4 4" fill="none" stroke="#0000ff" strokeWidth="2" />
        </svg>
      </IconButton>
      <IconButton $width={38} aria-label="Zoom out"><Lens><path d="M5.500 10.500h10" stroke="#0000ff" strokeWidth="3" /></Lens></IconButton>
      <IconButton $width={36} aria-label="Zoom in"><Lens><path d="M5.500 10.500h10M10.500 5.500v10" stroke="#0000ff" strokeWidth="3" /></Lens></IconButton>
      <IconButton $width={32} aria-label="Show keyboard">
        <svg width="30" height="28" viewBox="0 0 30 28">
          <path d="M1 3h28v9H1z" fill="#eee" stroke="#999" />
          <path d="M4 7.500h22" stroke="#444" strokeWidth="4" strokeDasharray="4 2" />
          <path d="M13 14h4v5h4l-6 6-6-6h4z" fill="#1e5ad2" />
        </svg>
      </IconButton>
    </BottomIcons>
  </BottomBar>
);

const App = () => {
  return (
    <Window>
      <GlobalStyle />
      <Toolbar />
      <Middle>
        <Sidebar>
          <Scroller aria-label="Scroll tools up"><Chevron dir="up" color="#6e8490" /></Scroller>
          <Tools>
            {TOOLS.map(([name, icon], i) => (
              <Tool key={name} aria-label={name} $active={i === 0}>
                <svg width="40" height="40" viewBox="0 0 40 40">{icon}</svg>
              </Tool>
            ))}
          </Tools>
          <Scroller $raised aria-label="Scroll tools down"><Chevron /></Scroller>
          <SideFoot>
            <IconButton $width={40} $height={40} aria-label="Saved drawings">
              <svg width="40" height="40" viewBox="0 0 40 40" fill="none">
                <path d="M8 5h17l6 6v20H8z" fill="#fff" stroke="#999" />
                <path d="M12 26l4-10 5 12 4-8" stroke="#222" strokeWidth="1.500" />
                <path d="M18 12l10 8" stroke={RED} strokeWidth="2" />
                <path d="M14 28h8" stroke="#00b43c" strokeWidth="2" />
                <circle cx="12" cy="9" r="8" fill="#0a9614" />
                <Letter x={8} y={14} size={14} color="#fff">1</Letter>
                <path d="M21 30l7-7q-1-7 7-7l-3 5 2 3 5-1q1 7-7 7l-6 6q-5 0-5-6z" fill="#fff" stroke="#000" strokeWidth="2" />
                <MenuMark x={34} y={36} />
              </svg>
            </IconButton>
            <IconButton $width={40} $height={28} aria-label="More">
              <svg width="40" height="28" viewBox="0 0 40 28">
                <g fill="#3c3c3c"><circle cx="11" cy="10" r="3.500" /><circle cx="21" cy="10" r="3.500" /><circle cx="31" cy="10" r="3.500" /></g>
                <MenuMark x={31} y={20} />
              </svg>
            </IconButton>
          </SideFoot>
        </Sidebar>
        <Chart>
          <Row>
            <PlotArea />
            <Prices />
          </Row>
          <Days />
        </Chart>
      </Middle>
      <Footer />
    </Window>
  );
};

export default App;
